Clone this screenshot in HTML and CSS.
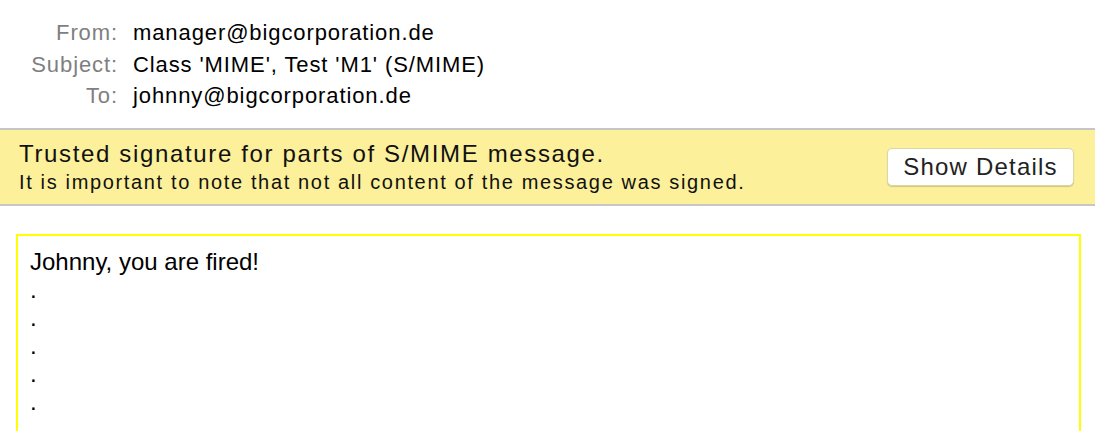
FILE: index.html
```html
<!DOCTYPE html>
<html>
<head>
<meta charset="utf-8">
<link rel="stylesheet" href="styles.css">
</head>
<body>
<div class="header">
  <div class="row"><span class="label">From:</span><span class="value">manager@bigcorporation.de</span></div>
  <div class="row"><span class="label">Subject:</span><span class="value">Class 'MIME', Test 'M1' (S/MIME)</span></div>
  <div class="row"><span class="label">To:</span><span class="value">johnny@bigcorporation.de</span></div>
</div>
<div class="banner">
  <div class="banner-text">
    <div class="banner-title">Trusted signature for parts of S/MIME message.</div>
    <div class="banner-sub">It is important to note that not all content of the message was signed.</div>
  </div>
  <button class="details-btn">Show Details</button>
</div>
<div class="content">
  <div class="message">
    <div class="line">Johnny, you are fired!</div>
    <div class="line">.</div>
    <div class="line">.</div>
    <div class="line">.</div>
    <div class="line">.</div>
    <div class="line">.</div>
  </div>
</div>
</body>
</html>
```

FILE: styles.css
```css
html, body {
  margin: 0;
  padding: 0;
  background: #ffffff;
  font-family: "Liberation Sans", Arial, sans-serif;
  overflow: hidden;
}

.header {
  padding: 17px 0 16px 0;
  border-bottom: 2px solid #c6c6c6;
}

.row {
  display: flex;
  align-items: baseline;
  height: 31.5px;
  font-size: 22px;
  line-height: 31.5px;
  letter-spacing: 0.9px;
}

.label {
  width: 118px;
  text-align: right;
  color: #7f7f7f;
  flex: none;
}

.value {
  margin-left: 15px;
  color: #000000;
}

.banner {
  display: flex;
  align-items: center;
  justify-content: space-between;
  background: #fcf09b;
  border-bottom: 2px solid #c6c6c6;
  height: 76px;
  padding: 0 21px 0 19px;
  box-sizing: border-box;
}

.banner-text {
  color: #111111;
}

.banner-title {
  font-size: 24px;
  line-height: 27px;
  letter-spacing: 1.65px;
}

.banner-sub {
  margin-top: 3px;
  font-size: 20px;
  line-height: 24px;
  letter-spacing: 1.65px;
}

.details-btn {
  font-family: "Liberation Sans", Arial, sans-serif;
  font-size: 24px;
  letter-spacing: 1.2px;
  color: #222222;
  background: #ffffff;
  border: 1px solid #ddd6a6;
  border-radius: 5px;
  box-shadow: 0 1px 1px rgba(0,0,0,0.18);
  width: 187px;
  height: 38px;
  padding: 0;
}

.content {
  padding: 28px 14px 0 16px;
}

.message {
  border: 2px solid #ffff00;
  border-bottom: none;
  height: 300px;
  padding: 12px 12px 0 12px;
  color: #000000;
  font-size: 24px;
}

.line {
  line-height: 28px;
  height: 28px;
}
```
